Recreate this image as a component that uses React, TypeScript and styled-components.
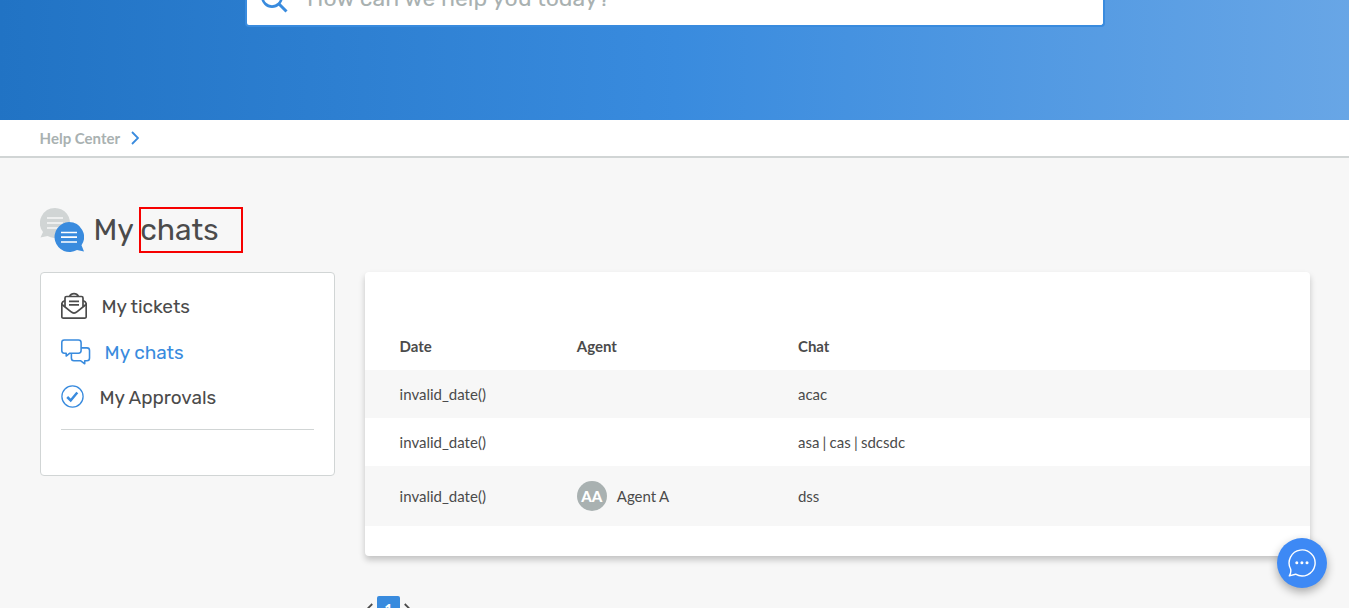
import React from 'react';
import styled, { createGlobalStyle, css } from 'styled-components';

const GlobalStyle = createGlobalStyle`
  *, *::before, *::after { box-sizing: border-box; }
  html, body { margin: 0; padding: 0; height: 100%; overflow: hidden; }
  body { background: #f7f7f7; color: #4b4b4b; font-family: Lato, sans-serif; font-size: 15px; }
`;

const headingFont = css`font-family: Rubik, Roboto, sans-serif; font-weight: 400;`;

const Page = styled.div`
  height: 608px;
  overflow: hidden;
  background: #f7f7f7;
`;

const Hero = styled.header`
  height: 120px;
  padding: 0 244px 0 245px;
  background: linear-gradient(91deg, #2173c4 0%, #398bde 50%, #68a6e6 100%);
`;

const SearchBox = styled.div`
  height: 27px;
  display: flex;
  align-items: flex-end;
  gap: 19px;
  padding: 0 0 11px 13px;
  overflow: hidden;
  background: #fff;
  border: 2px solid #398bde;
  border-top: 0;
  border-radius: 0 0 4px 4px;

  svg { flex: none; margin-bottom: 1px; }
`;

const Placeholder = styled.span`
  ${headingFont}
  font-size: 23px;
  line-height: 26px;
  color: #a9b1b1;
  margin-bottom: 3px;
`;

const Breadcrumb = styled.nav`
  height: 38px;
  display: flex;
  align-items: center;
  gap: 11px;
  padding-left: 39.6px;
  background: #fff;
  border-bottom: 2px solid #d1d5d5;
  color: #a9b1b1;
  font-weight: 700;
  line-height: 18px;
`;

const Main = styled.main`
  padding: 50px 39px 0 40px;
`;

const Title = styled.h1`
  ${headingFont}
  display: flex;
  align-items: center;
  height: 44px;
  margin: 0 0 20px;
  font-size: 30px;
  line-height: 44px;

  svg { flex: none; margin-right: 9.5px; }
`;

const FirstWord = styled.span`
  width: 39.5px;
`;

const Highlighted = styled.span`
  width: 104px;
  height: 46px;
  margin: -1px 0 -1px 6px;
  border: 2px solid #f60000;
  line-height: 42px;
  text-indent: -0.8px;
`;

const Columns = styled.div`
  display: grid;
  grid-template-columns: 295px 1fr;
  column-gap: 30px;
  align-items: start;
`;

const SideMenu = styled.aside`
  height: 204px;
  padding: 10px 20px;
  background: #fff;
  border: 1px solid #d1d5d5;
  border-radius: 4px;
`;

const MenuList = styled.ul`
  margin: 0;
  padding: 0 0 10px;
  list-style: none;
  border-bottom: 1px solid #d1d5d5;
`;

const MenuItem = styled.li<{ $active?: boolean; $gap: number; $height?: number }>`
  ${headingFont}
  display: flex;
  align-items: center;
  gap: ${p => p.$gap}px;
  height: ${p => p.$height ?? 46}px;
  font-size: 19px;
  letter-spacing: -0.03px;
  color: ${p => (p.$active ? '#398bde' : '#4b4b4b')};
  svg { flex: none; }
`;

const Panel = styled.section`
  height: 284px;
  padding-top: 50px;
  background: #fff;
  border-radius: 4px;
  box-shadow: 0 4px 6px rgba(0, 0, 0, 0.21);
`;

const Row = styled.div<{ $shaded?: boolean; $tall?: boolean; $head?: boolean }>`
  display: grid;
  grid-template-columns: 177.200px 221.200px 1fr;
  align-items: center;
  height: ${p => (p.$tall ? 60 : 48)}px;
  padding: 0 35px 0 34.600px;
  background: ${p => (p.$shaded ? '#f7f7f7' : '#fff')};
  font-weight: ${p => (p.$head ? 700 : 400)};
  word-spacing: -0.6px;
`;

const Agent = styled.div`
  display: flex;
  align-items: center;
  gap: 10px;
`;

const Avatar = styled.span`
  width: 30px;
  height: 30px;
  border-radius: 50%;
  background: #a9b1b1;
  color: #fff;
  font-weight: 900;
  line-height: 30px;
  text-align: center;
`;

const Pagination = styled.nav`
  display: flex;
  align-items: flex-start;
  gap: 4px;
  margin: 40px 0 0 327px;

  svg { margin-top: 7px; }
`;

const PageNumber = styled.span`
  width: 23px;
  height: 26px;
  border-radius: 2px 2px 0 0;
  background: #398bde;
  color: #fff;
  font-weight: 700;
  line-height: 26px;
  text-align: center;
`;

const ChatButton = styled.button`
  position: fixed;
  right: 22px;
  bottom: 20px;
  width: 50px;
  height: 50px;
  padding: 0 1px 0 0;
  display: grid;
  place-items: center;
  border: 0;
  border-radius: 50%;
  background: #3d89f5;
  box-shadow: 0 4px 10px rgba(0, 0, 0, 0.32);
`;

const SearchIcon = () => (
  <svg width="28" height="28" viewBox="0 0 28 28" fill="none" stroke="#398bde" strokeWidth="2.6">
    <circle cx="12" cy="12" r="9.6" />
    <path d="M19 19l7.5 7.5" strokeWidth="3" />
  </svg>
);

const TitleIcon = () => (
  <svg width="44" height="44" viewBox="0 0 44 44">
    <path d="M15 0a15 15 0 1 1-7.5 28L.5 29.5 3 24A15 15 0 0 1 15 0z" fill="#d1d5d5" />
    <path d="M7 10h16M7 15h16M7 20h16" stroke="#f7f7f7" strokeWidth="1.6" />
    <path d="M29 14a15 15 0 0 1 12.5 23.3L44 43.5 37 42A15 15 0 1 1 29 14z" fill="#398bde" />
    <path d="M21 24.5h16M21 29.2h16M21 34h16" stroke="#fff" strokeWidth="1.7" />
  </svg>
);

const TicketsIcon = () => (
  <svg width="26" height="28" viewBox="0 0 26 28" fill="none" stroke="#4b4b4b" strokeWidth="1.7" strokeLinejoin="round">
    <path d="M4 8.5C1.8 9.3.8 10.4.8 12v12.7c0 .9.6 1.5 1.5 1.5h21.4c.9 0 1.5-.6 1.5-1.5V12c0-1.6-1-2.7-3.200-3.500" />
    <path d="M1 12.5l8.8 7.2c2 1.700 4.400 1.700 6.400 0l8.800-7.200" />
    <path d="M4 14.800V6c0-.9.600-1.500 1.500-1.500h15c.9 0 1.500.6 1.500 1.500v8.800M8.500 4.500C10.500.7 15.500.7 17.500 4.500" />
    <path d="M8 9.300h10M8 12.800h10" />
  </svg>
);

const ChatsIcon = () => (
  <svg width="30" height="26" viewBox="0 0 30.6 26" fill="none" stroke="#398bde" strokeWidth="1.6" strokeLinejoin="round">
    <path d="M3.300.8h14.500c1.700 0 2.700 1 2.700 2.700v8c0 1.700-1 2.700-2.700 2.700H9l-3.700 2.900v-2.900h-2c-1.600 0-2.500-1-2.500-2.700v-8c0-1.700.9-2.700 2.500-2.700z" />
    <path d="M20.500 8.800h6c1.700 0 2.600 1 2.600 2.700v7.700c0 1.800-1 2.800-2.600 2.800h-2.300v3l-4-3h-7c-1.700 0-2.600-1-2.600-2.800v-5" />
  </svg>
);

const ApprovalsIcon = () => (
  <svg width="23" height="24" viewBox="0 0 23 24" fill="none" stroke="#398bde">
    <circle cx="11.5" cy="11.5" r="10.6" strokeWidth="1.3" />
    <path d="M6.2 12l3.5 3.5 6.6-8" strokeWidth="2.5" />
  </svg>
);

const BubbleIcon = () => (
  <svg width="30" height="30" viewBox="0 0 30 30" fill="none">
    <path d="M3.6 21A13 13 0 1 1 8.6 26.2L2.3 27.9C3.7 25.7 4.2 23.4 3.6 21z" stroke="#fff" strokeWidth="1.4" strokeLinejoin="round" />
    <g fill="#fff"><circle cx="9.8" cy="14.7" r="1.5" /><circle cx="14.9" cy="14.7" r="1.5" /><circle cx="20" cy="14.7" r="1.5" /></g>
  </svg>
);

const Chevron = ({ flip, color, width = 8, height = 14, stroke = 1.8 }: { flip?: boolean; color: string; width?: number; height?: number; stroke?: number }) => (
  <svg width={width} height={height} viewBox="0 0 8 14" fill="none" stroke={color} strokeWidth={stroke}>
    <path d={flip ? 'M7 1L1 7l6 6' : 'M1 1l6 6-6 6'} />
  </svg>
);

const chats = [
  { date: 'invalid_date()', chat: 'acac' },
  { date: 'invalid_date()', chat: 'asa | cas | sdcsdc' },
  { date: 'invalid_date()', agent: 'Agent A', initials: 'AA', chat: 'dss' },
];

export default function App() {
  return (
    <Page>
      <GlobalStyle />
      <Hero>
        <SearchBox>
          <SearchIcon />
          <Placeholder>How can we help you today?</Placeholder>
        </SearchBox>
      </Hero>
      <Breadcrumb>
        <span>Help Center</span>
        <Chevron color="#398bde" />
      </Breadcrumb>
      <Main>
        <Title>
          <TitleIcon />
          <FirstWord>My</FirstWord>
          <Highlighted>chats</Highlighted>
        </Title>
        <Columns>
          <SideMenu>
            <MenuList>
              <MenuItem $gap={14.4}><TicketsIcon /><span>My tickets</span></MenuItem>
              <MenuItem $gap={13.6} $active><ChatsIcon /><span>My chats</span></MenuItem>
              <MenuItem $gap={15.4} $height={44}><ApprovalsIcon /><span>My Approvals</span></MenuItem>
            </MenuList>
          </SideMenu>
          <Panel>
            <Row $head><span>Date</span><span>Agent</span><span>Chat</span></Row>
            {chats.map((c, i) => (
              <Row key={i} $shaded={i % 2 === 0} $tall={!!c.agent}>
                <span>{c.date}</span>
                <Agent>{c.agent && <><Avatar>{c.initials}</Avatar><span>{c.agent}</span></>}</Agent>
                <span>{c.chat}</span>
              </Row>
            ))}
          </Panel>
        </Columns>
        <Pagination>
          <Chevron flip color="#4b4b4b" width={6} height={11} stroke={2.4} />
          <PageNumber>1</PageNumber>
          <Chevron color="#4b4b4b" width={6} height={11} stroke={2.4} />
        </Pagination>
      </Main>
      <ChatButton aria-label="Open chat"><BubbleIcon /></ChatButton>
    </Page>
  );
}
